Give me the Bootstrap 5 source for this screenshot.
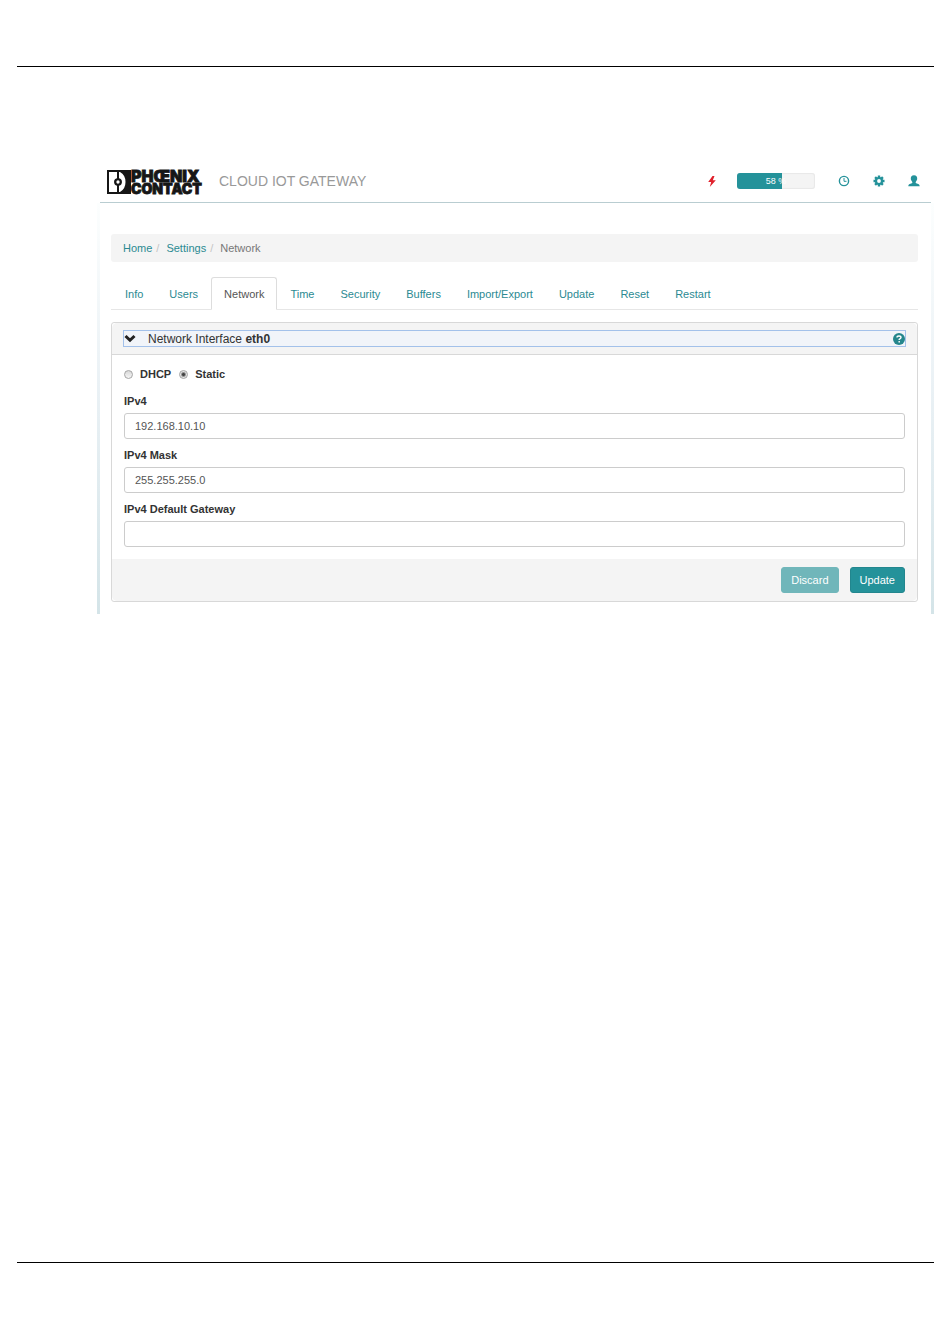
<!DOCTYPE html>
<html lang="en">
<head>
<meta charset="utf-8">
<meta name="viewport" content="width=device-width, initial-scale=1">
<title>Cloud IoT Gateway - Network</title>
<link rel="stylesheet" href="https://cdn.jsdelivr.net/npm/bootstrap@5.3.0/dist/css/bootstrap.min.css">
<style>
:root { --teal: #24929a; --line: #d8d8d8; --soft: #f4f4f4; }
body { font-family: "Liberation Sans", Arial, sans-serif; font-size: 11px; line-height: 16px; color: #333; background: #fff; }
a { color: #2b8a92; text-decoration: none; }
.sheet { padding: 66px 16px 60px 17px; }
.rule { border: 0; border-top: 1px solid #000; opacity: 1; margin: 0; }
.sheet-content { padding: 95px 0 0 80px; }
.masthead { height: 41px; margin: 0 3px; padding: 0 11px 2px 7px; border-bottom: 1px solid #b9cdd1; }
.product { font-size: 14px; color: #999; }
.logo { overflow: visible; }
.logo-word { font-family: Inter, "Liberation Sans", sans-serif; font-weight: 900; fill: #161616; stroke: #161616; stroke-width: .8px; }
.bolt { margin-right: 21px; }
.meter { width: 78px; height: 16px; border-radius: 3px; background: #f4f4f4; box-shadow: inset 0 0 1px 1px #e8e8e8; margin-right: 23px; }
.meter .progress-bar { background: var(--teal); overflow: visible; font-size: 9px; align-items: flex-start; }
.meter-label { width: 78px; text-align: center; }
.tools { gap: 23px; }
.tool { width: 12px; height: 12px; display: block; color: var(--teal); }
.shell { border: 3px solid; border-width: 0 3px; border-image: linear-gradient(#fcfefe, #eaf1f5 45%, #d4e4e8) 1; padding: 31px 13px 12px 11px; }
.crumbs { background: var(--soft); border-radius: 3px; padding: 6px 12px; margin-bottom: 15px; font-size: 11px; --bs-breadcrumb-divider-color: #c4c4c4; }
.crumbs .breadcrumb-item + .breadcrumb-item { padding-left: 4px; }
.crumbs .breadcrumb-item + .breadcrumb-item::before { padding-right: 7px; }
.crumbs .active { color: #777; }
.tabs { border-bottom-color: #e6e6e6; padding-left: 1px; margin-bottom: 12px; }
.tabs .nav-link { color: #2b8a92; padding: 8px 12px 7px; border-radius: 3px 3px 0 0; }
.tabs .nav-link.active { color: #555; border-color: #ddd #ddd #fff; }
.panel { border: 1px solid var(--line); border-radius: 3px; }
.panel .card-header { background: var(--soft); border-color: var(--line); padding: 7px 11px; }
.toggle { border: 1px solid #a3c1ea; background: #f1f4f9; padding: 1px 0 0; height: 17px; font-size: 12px; line-height: 14px; color: #333; }
.panel .card-body { padding: 11px 12px 12px; }
.panel .card-footer { background: var(--soft); border: 0; padding: 8px 12px; gap: 11px; }
.panel label { font-weight: bold; color: #333; }
.modes { gap: 8px; margin-bottom: 11px; }
.choice { appearance: none; width: 9px; height: 9px; margin: 0 7px 0 0; border: 1px solid #a5a5a5; border-radius: 50%; background: linear-gradient(#d8d8d8, #f6f6f6); }
.choice:checked { background: radial-gradient(circle, #444 0 1px, #e4e4e4 3px); }
.field { height: 26px; padding: 4px 10px; font-size: 11px; line-height: 16px; color: #555; border: 1px solid #ccc; border-radius: 3px; margin-bottom: 8px; }
.action { font-size: 11px; line-height: 16px; padding: 4px 9px; border-radius: 3px; color: #fff; background: var(--teal); border: 1px solid #22868e; }
.action:disabled { background: #70b6ba; border-color: #70b6ba; color: #fff; opacity: 1; }
</style>
</head>
<body>
<div class="sheet min-vh-100 d-flex flex-column">
  <hr class="rule">
  <div class="sheet-content">
    <header class="masthead d-flex align-items-center">
      <a href="#" class="me-3" aria-label="Phoenix Contact">
        <svg class="logo d-block" width="96" height="26" viewBox="0 0 96 26">
          <path fill="#161616" fill-rule="evenodd" d="M0 2H24V26H0ZM2 4V24H10V17.700A3.800 3.800 0 0 1 10 10.300V4ZM12 4V10.300A3.800 3.800 0 0 1 12 17.700V24H13Q18.500 21 18.500 14Q18.500 7 13 4Z"/>
          <circle cx="11" cy="14" r="2.400" fill="#fff" stroke="#161616" stroke-width="1.500"/>
          <text class="logo-word" x="24" y="14" font-size="16">PHŒNIX</text>
          <text class="logo-word" x="24" y="26" font-size="14">CONTACT</text>
        </svg>
      </a>
      <span class="product">CLOUD IOT GATEWAY</span>
      <div class="ms-auto d-flex align-items-center">
        <svg class="bolt" width="8" height="12" viewBox="0 0 8 12" aria-label="Power"><path fill="#e0202b" d="M4.500 1L.2 7H3.200L1.800 12L7.800 5.200H4.800L6.500 1Z"/></svg>
        <div class="progress meter" role="progressbar" aria-valuenow="58" aria-valuemin="0" aria-valuemax="100">
          <div class="progress-bar" style="width:58%"><span class="meter-label">58 %</span></div>
        </div>
        <nav class="d-flex tools">
          <a href="#" aria-label="Time"><svg class="tool" viewBox="0 0 12 12" fill="none" stroke="currentColor"><circle cx="6" cy="6" r="4.600" stroke-width="1.400"/><path d="M6 3V6.300H8.500"/></svg></a>
          <a href="#" aria-label="Settings"><svg class="tool" viewBox="0 0 12 12"><g stroke="currentColor" stroke-width="2.400"><path d="M6 .5V3M6 9V11.500M.5 6H3M9 6H11.500M2.100 2.100L4 4M8 8L9.900 9.900M9.900 2.100L8 4M4 8L2.100 9.900"/></g><circle cx="6" cy="6" r="3" fill="none" stroke="currentColor" stroke-width="2.200"/></svg></a>
          <a href="#" aria-label="Account"><svg class="tool" viewBox="0 0 12 12" fill="currentColor"><path d="M6 .3C8.300 .3 9.400 2 9.200 4C9.100 5.300 8.300 6 7.700 6.900V8C9 8.800 11.700 8.700 11.700 11.300H.3C.3 8.700 3 8.800 4.300 8V6.900C3.700 6 2.900 5.300 2.800 4C2.600 2 3.700 .3 6 .3Z"/></svg></a>
        </nav>
      </div>
    </header>
    <main class="shell">
      <nav aria-label="Breadcrumb">
        <ol class="breadcrumb crumbs">
          <li class="breadcrumb-item"><a href="#">Home</a></li>
          <li class="breadcrumb-item"><a href="#">Settings</a></li>
          <li class="breadcrumb-item active" aria-current="page">Network</li>
        </ol>
      </nav>
      <ul class="nav nav-tabs tabs">
        <li class="nav-item"><a class="nav-link" href="#">Info</a></li>
        <li class="nav-item"><a class="nav-link" href="#">Users</a></li>
        <li class="nav-item"><a class="nav-link active" aria-current="page" href="#">Network</a></li>
        <li class="nav-item"><a class="nav-link" href="#">Time</a></li>
        <li class="nav-item"><a class="nav-link" href="#">Security</a></li>
        <li class="nav-item"><a class="nav-link" href="#">Buffers</a></li>
        <li class="nav-item"><a class="nav-link" href="#">Import/Export</a></li>
        <li class="nav-item"><a class="nav-link" href="#">Update</a></li>
        <li class="nav-item"><a class="nav-link" href="#">Reset</a></li>
        <li class="nav-item"><a class="nav-link" href="#">Restart</a></li>
      </ul>
      <form class="card panel" onsubmit="return false">
        <div class="card-header">
          <button type="button" class="toggle w-100 d-flex align-items-center" data-bs-toggle="collapse" data-bs-target="#eth0" aria-expanded="true">
            <svg width="24" height="12" viewBox="0 0 24 12"><path d="M1.500 3L6 7.300L10.500 3" fill="none" stroke="#222" stroke-width="3"/></svg>
            <span>Network Interface <b>eth0</b></span>
            <svg class="ms-auto" width="12" height="12" viewBox="0 0 12 12"><circle cx="6" cy="6" r="6" fill="#24868c"/><path d="M4 4.600Q4 3 6 3T8 4.600Q8 5.600 6.200 6.400V7M6.200 8V9.400" fill="none" stroke="#fff" stroke-width="1.400"/></svg>
          </button>
        </div>
        <div id="eth0" class="collapse show">
          <div class="card-body">
            <div class="d-flex modes">
              <div class="d-flex align-items-center"><input class="choice" type="radio" name="mode" id="dhcp"><label for="dhcp">DHCP</label></div>
              <div class="d-flex align-items-center"><input class="choice" type="radio" name="mode" id="static" checked><label for="static">Static</label></div>
            </div>
            <label class="d-block mb-1" for="ip">IPv4</label>
            <input class="form-control field" type="text" id="ip" value="192.168.10.10">
            <label class="d-block mb-1" for="mask">IPv4 Mask</label>
            <input class="form-control field" type="text" id="mask" value="255.255.255.0">
            <label class="d-block mb-1" for="gateway">IPv4 Default Gateway</label>
            <input class="form-control field mb-0" type="text" id="gateway">
          </div>
          <div class="card-footer d-flex justify-content-end">
            <button type="button" class="btn action" disabled>Discard</button>
            <button type="submit" class="btn action">Update</button>
          </div>
        </div>
      </form>
    </main>
  </div>
  <hr class="rule mt-auto">
</div>
<script src="https://cdn.jsdelivr.net/npm/bootstrap@5.3.0/dist/js/bootstrap.bundle.min.js"></script>
</body>
</html>
